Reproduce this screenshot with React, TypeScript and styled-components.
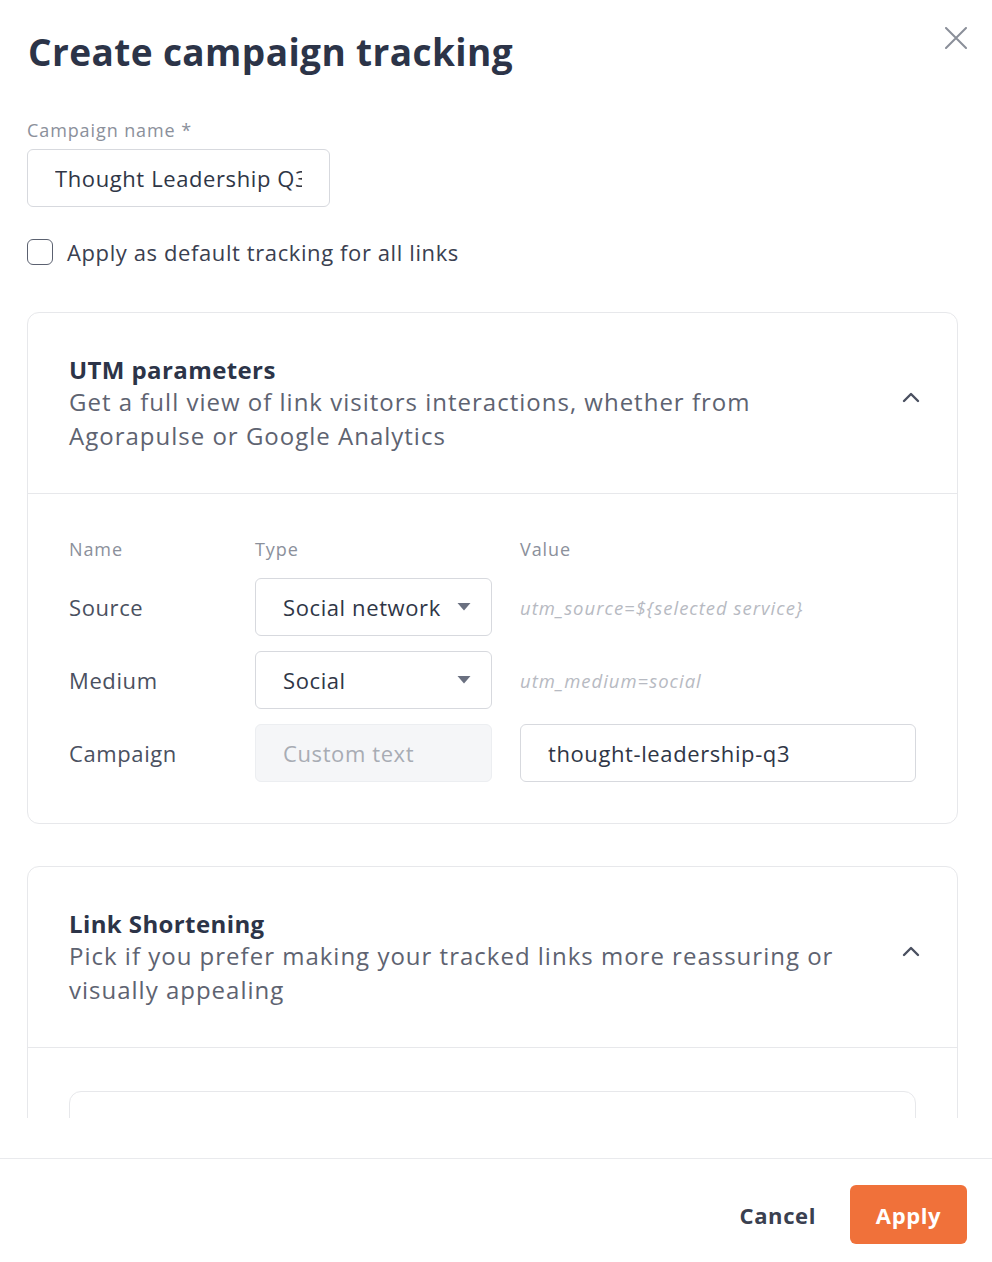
import styled, { createGlobalStyle } from 'styled-components';

const GlobalStyle = createGlobalStyle`
  html, body {
    margin: 0;
    padding: 0;
    background: #ffffff;
  }
  * {
    box-sizing: border-box;
  }
  body {
    font-family: 'Open Sans', 'Noto Sans', sans-serif;
    color: #3a4050;
  }
`;

const Modal = styled.div`
  width: 992px;
  height: 1262px;
  display: flex;
  flex-direction: column;
  background: #ffffff;
  overflow: hidden;
`;

const Header = styled.div`
  display: flex;
  align-items: flex-start;
  justify-content: space-between;
  padding: 28px 24px 0 28px;
`;

const Title = styled.h1`
  margin: 0;
  font-size: 37px;
  line-height: 48px;
  font-weight: 700;
  color: #2c3448;
  letter-spacing: 0.4px;
`;

const CloseButton = styled.button`
  width: 24px;
  height: 24px;
  margin-top: -2px;
  padding: 0;
  border: 0;
  background: none;
  cursor: pointer;
  display: flex;
  align-items: center;
  justify-content: center;
`;

const ScrollArea = styled.div`
  flex: 1;
  overflow: hidden;
  padding: 0 34px 0 27px;
  margin-bottom: 40px;
`;

const FieldLabel = styled.div`
  margin-top: 42px;
  margin-bottom: 7px;
  font-size: 18px;
  line-height: 24px;
  color: #8b909b;
  letter-spacing: 0.9px;
`;

const TextInput = styled.input<{ $width: string }>`
  display: block;
  width: ${(p) => p.$width};
  height: 58px;
  padding: 0 27px;
  border: 1px solid #d7d9de;
  border-radius: 6px;
  font-family: inherit;
  font-size: 22px;
  letter-spacing: 0.6px;
  color: #2f3646;
  background: #ffffff;
  outline: none;
`;

const CheckboxRow = styled.label`
  margin-top: 32px;
  display: flex;
  align-items: center;
  gap: 14px;
  font-size: 22px;
  line-height: 26px;
  letter-spacing: 0.6px;
  color: #3a4050;
`;

const CheckBox = styled.span`
  width: 26px;
  height: 26px;
  border: 1.5px solid #5b6170;
  border-radius: 6px;
  background: #ffffff;
`;

const Card = styled.section<{ $top: number }>`
  margin-top: ${(p) => p.$top}px;
  border: 1px solid #e7e8eb;
  border-radius: 12px;
  background: #ffffff;
`;

const CardHeader = styled.div`
  display: flex;
  align-items: center;
  justify-content: space-between;
  padding: 42px 36px 40px 41px;
  border-bottom: 1px solid #e7e8eb;
`;

const CardHeading = styled.div`
  display: flex;
  flex-direction: column;
`;

const CardTitle = styled.div`
  font-size: 24px;
  line-height: 30px;
  font-weight: 700;
  letter-spacing: 0.4px;
  color: #2c3448;
`;

const CardDescription = styled.div`
  max-width: 770px;
  font-size: 24px;
  line-height: 34px;
  letter-spacing: 1px;
  color: #5e6371;
`;

const Chevron = styled.svg`
  flex-shrink: 0;
  margin-top: -12px;
`;

const CardBody = styled.div`
  padding: 43px 41px 41px 41px;
`;

const ParamGrid = styled.div`
  display: grid;
  grid-template-columns: 186px 265px 396px;
  row-gap: 15px;
  align-items: center;
`;

const ColumnHead = styled.div`
  font-size: 18px;
  line-height: 24px;
  letter-spacing: 0.9px;
  color: #8b909b;
  margin-bottom: 2px;
`;

const RowName = styled.div`
  font-size: 22px;
  letter-spacing: 0.6px;
  color: #4a5060;
`;

const SelectBox = styled.div<{ $disabled?: boolean }>`
  width: 237px;
  height: 58px;
  display: flex;
  align-items: center;
  justify-content: space-between;
  padding: 0 20px 0 27px;
  border: 1px solid ${(p) => (p.$disabled ? '#eceef1' : '#d7d9de')};
  border-radius: 6px;
  background: ${(p) => (p.$disabled ? '#f5f6f8' : '#ffffff')};
  font-size: 22px;
  letter-spacing: 0.6px;
  color: ${(p) => (p.$disabled ? '#a8acb4' : '#2f3646')};
`;

const ValueHint = styled.div`
  font-size: 18.5px;
  letter-spacing: 1px;
  font-style: italic;
  color: #b7bac2;
`;

const InnerBox = styled.div`
  height: 80px;
  border: 1px solid #e7e8eb;
  border-radius: 12px;
`;

const Footer = styled.footer`
  height: 104px;
  border-top: 1px solid #e9eaed;
  display: flex;
  align-items: center;
  justify-content: flex-end;
  gap: 34px;
  padding: 8px 25px 0 0;
`;

const CancelButton = styled.button`
  border: 0;
  background: none;
  font-family: inherit;
  font-size: 22px;
  letter-spacing: 0.6px;
  font-weight: 700;
  color: #3a4050;
  cursor: pointer;
  padding: 0;
`;

const ApplyButton = styled.button`
  width: 117px;
  height: 59px;
  border: 0;
  border-radius: 6px;
  background: #f0713a;
  color: #ffffff;
  font-family: inherit;
  font-size: 22px;
  letter-spacing: 0.6px;
  font-weight: 700;
  cursor: pointer;
`;

const Caret = () => (
  <svg width="14" height="8" viewBox="0 0 14 8">
    <path d="M0.5 0 H13.5 L7 7.5 Z" fill="#6a7080" />
  </svg>
);

const ChevronUp = () => (
  <Chevron width="20" height="20" viewBox="0 0 20 20">
    <path d="M3 13 L10 6 L17 13" fill="none" stroke="#4a5060" strokeWidth="2.4" strokeLinecap="round" strokeLinejoin="round" />
  </Chevron>
);

const params = [
  { name: 'Source', type: 'Social network', value: 'utm_source=${selected service}' },
  { name: 'Medium', type: 'Social', value: 'utm_medium=social' },
];

export default function App() {
  return (
    <>
      <GlobalStyle />
      <Modal>
        <Header>
          <Title>Create campaign tracking</Title>
          <CloseButton aria-label="Close">
            <svg width="22" height="22" viewBox="0 0 22 22">
              <path d="M1 1 L21 21 M21 1 L1 21" stroke="#8a8f99" strokeWidth="2" strokeLinecap="round" />
            </svg>
          </CloseButton>
        </Header>

        <ScrollArea>
          <FieldLabel>Campaign name *</FieldLabel>
          <TextInput $width="303px" defaultValue="Thought Leadership Q3" />

          <CheckboxRow>
            <CheckBox />
            Apply as default tracking for all links
          </CheckboxRow>

          <Card $top={47}>
            <CardHeader>
              <CardHeading>
                <CardTitle>UTM parameters</CardTitle>
                <CardDescription>
                  Get a full view of link visitors interactions, whether from Agorapulse or Google Analytics
                </CardDescription>
              </CardHeading>
              <ChevronUp />
            </CardHeader>
            <CardBody>
              <ParamGrid>
                <ColumnHead>Name</ColumnHead>
                <ColumnHead>Type</ColumnHead>
                <ColumnHead>Value</ColumnHead>
                {params.map((p) => (
                  <>
                    <RowName key={p.name}>{p.name}</RowName>
                    <SelectBox>
                      {p.type}
                      <Caret />
                    </SelectBox>
                    <ValueHint>{p.value}</ValueHint>
                  </>
                ))}
                <RowName>Campaign</RowName>
                <SelectBox $disabled>Custom text</SelectBox>
                <TextInput $width="396px" defaultValue="thought-leadership-q3" />
              </ParamGrid>
            </CardBody>
          </Card>

          <Card $top={42}>
            <CardHeader>
              <CardHeading>
                <CardTitle>Link Shortening</CardTitle>
                <CardDescription>
                  Pick if you prefer making your tracked links more reassuring or visually appealing
                </CardDescription>
              </CardHeading>
              <ChevronUp />
            </CardHeader>
            <CardBody>
              <InnerBox />
            </CardBody>
          </Card>
        </ScrollArea>

        <Footer>
          <CancelButton>Cancel</CancelButton>
          <ApplyButton>Apply</ApplyButton>
        </Footer>
      </Modal>
    </>
  );
}
